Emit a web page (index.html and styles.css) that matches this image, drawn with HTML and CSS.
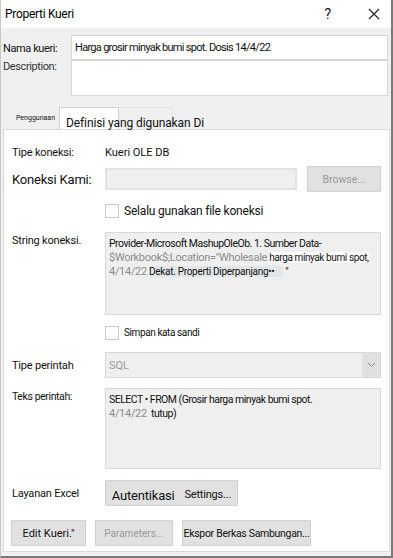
FILE: index.html
```html
<!DOCTYPE html>
<html>
<head>
  <title>Properti Kueri</title>
  <link rel="stylesheet" href="styles.css">
</head>
<body>
  <div class="window">

    <!-- title bar -->
    <div class="titlebar">
      <span class="title">Properti Kueri</span>
      <span class="help">?</span>
      <svg class="close" width="12" height="12" viewBox="0 0 12 12">
        <path d="M1 1 L11 11 M11 1 L1 11" stroke="#222" stroke-width="1.2" fill="none"/>
      </svg>
    </div>

    <!-- name + description -->
    <div class="top">
      <div class="top-row">
        <label class="top-label">Nama kueri:</label>
        <div class="top-input">Harga grosir minyak bumi spot. Dosis 14/4/22</div>
      </div>
      <div class="top-row desc">
        <label class="top-label">Description:</label>
        <div class="top-input tall"></div>
      </div>
    </div>

    <!-- tabs -->
    <div class="tabs">
      <span class="tab small">Penggunaan</span>
      <span class="tab boxed"><span class="tab-text">Definisi yang digunakan Di</span></span>
      <span class="tab ghost"></span>
    </div>

    <!-- tab panel -->
    <div class="panel">
      <div class="row r1">
        <span class="lbl">Tipe koneksi:</span>
        <span>Kueri OLE DB</span>
      </div>

      <div class="row r2">
        <span class="lbl big">Koneksi Kami:</span>
        <div class="field grow"></div>
        <div class="btn browse">Browse...</div>
      </div>

      <div class="row r3">
        <span class="lbl"></span>
        <span class="check"></span>
        <span class="check-text big">Selalu gunakan file koneksi</span>
      </div>

      <div class="row r4">
        <span class="lbl top-al">String koneksi.</span>
        <div class="field grow area">
          <div>Provider-Microsoft MashupOleOb. 1. Sumber Data-</div>
          <div><span class="dim">$Workbook$;Location="Wholesale</span> <span class="hl-white">harga minyak bumi spot,</span></div>
          <div><span class="dim">4/14/22</span> <span class="hl-blue">Dekat. Properti Diperpanjang•• &nbsp;&nbsp;&nbsp;</span> "</div>
        </div>
      </div>

      <div class="row r5">
        <span class="lbl"></span>
        <span class="check"></span>
        <span class="check-text">Simpan kata sandi</span>
      </div>

      <div class="row r6">
        <span class="lbl">Tipe perintah</span>
        <div class="field grow select">
          <span class="sel-val">SQL</span>
          <span class="sel-arrow">
            <svg width="9" height="6" viewBox="0 0 9 6"><path d="M1 1 L4.5 4.5 L8 1" stroke="#8a8a8a" stroke-width="1" fill="none"/></svg>
          </span>
        </div>
      </div>

      <div class="row r7">
        <span class="lbl top-al narrow">Teks perintah:</span>
        <div class="field grow area">
          <div>SELECT • FROM (Grosir harga minyak bumi spot.</div>
          <div><span class="dim">4/14/22</span> &nbsp;tutup)</div>
        </div>
      </div>

      <div class="row r8">
        <span class="lbl">Layanan Excel</span>
        <div class="btn auth"><span class="big">Autentikasi</span> Settings...</div>
      </div>

      <div class="row r9">
        <div class="btn edit">Edit Kueri."</div>
        <div class="btn params">Parameters...</div>
        <div class="btn export">Ekspor Berkas Sambungan...</div>
      </div>
    </div>

  </div>
</body>
</html>
```

FILE: styles.css
```css
body {
    margin: 0;
    font-family: Roboto, "Liberation Sans", sans-serif;
    font-size: 11px;
    color: #111;
    background-color: #fff;
}

.window {
    width: 393px;
    height: 558px;
    box-sizing: border-box;
    background-color: #f0f0f0;
    border-left: 1px solid #c8c8c8;
    border-right: 2px solid #7a7a7a;
    border-bottom: 2px solid #7a7a7a;
    overflow: hidden;
}

.titlebar {
    height: 28px;
    background-color: #fff;
    display: flex;
    align-items: center;
    padding-left: 4px;
}
.title {
    font-size: 12px;
    letter-spacing: -0.3px;
    color: #000;
}
.help {
    margin-left: auto;
    font-size: 14px;
    margin-right: 37px;
}
.close {
    margin-right: 11px;
}

.top {
    padding-top: 7px;
}
.top-row {
    display: flex;
    align-items: flex-start;
}
.top-label {
    width: 68px;
    padding-left: 2px;
    font-size: 11px;
    letter-spacing: -0.4px;
    padding-top: 7px;
}
.top-input {
    width: 317px;
    height: 25px;
    box-sizing: border-box;
    border: 1px solid #d6d6d6;
    background-color: #fff;
    padding: 5px 3px;
    font-size: 11px;
    letter-spacing: -0.7px;
    white-space: nowrap;
}
.top-input.tall {
    height: 36px;
}
.desc .top-label {
    padding-top: 0px;
    color: #333;
}

.tabs {
    height: 33px;
    display: flex;
    align-items: flex-end;
    padding-left: 3px;
}
.tab {
    height: 22px;
    box-sizing: border-box;
}
.tab.small {
    font-size: 7px;
    padding: 7px 0 0 12px;
    width: 55px;
}
.tab.boxed {
    width: 60px;
    background-color: #fff;
    border: 1px solid #cfcfcf;
    border-bottom: none;
    white-space: nowrap;
    padding: 8px 0 0 6px;
}
.tab-text {
    position: relative;
    z-index: 1;
    font-size: 12px;
    color: #111;
    letter-spacing: -0.1px;
}
.tab.ghost {
    width: 54px;
    border-top: 1px solid #e2e2e2;
    border-right: 1px solid #e8e8e8;
}

.panel {
    margin-left: 2px;
    width: 387px;
    height: 423px;
    box-sizing: border-box;
    background-color: #fff;
    border: 1px solid #dadada;
    padding: 0 8px 0 8px;
}

.row {
    display: flex;
    align-items: center;
}
.lbl {
    width: 93px;
    flex-shrink: 0;
    font-size: 11px;
    letter-spacing: -0.2px;
}
.lbl.top-al {
    align-self: flex-start;
    padding-top: 2px;
}
.lbl.narrow {
    font-size: 10.5px;
    letter-spacing: -0.4px;
}
.big {
    font-size: 13px;
}

.r1 { margin-top: 13px; height: 18px; }
.r2 { margin-top: 5px; height: 26px; }
.r3 { margin-top: 11px; height: 15px; }
.r4 { margin-top: 14px; height: 83px; align-items: stretch; }
.r5 { margin-top: 10px; height: 15px; }
.r6 { margin-top: 12px; height: 26px; }
.r7 { margin-top: 10px; height: 81px; align-items: stretch; }
.r8 { margin-top: 11px; height: 26px; }
.r9 { margin-top: 14px; height: 26px; gap: 9px; margin-left: -1px; }

.field {
    box-sizing: border-box;
    background-color: #efefef;
    border: 1px solid #d8d8d8;
    height: 100%;
}
.grow {
    flex: 1;
}
.r2 .field {
    height: 22px;
    margin-right: 10px;
    border: 2px solid #e2e2e2;
}

.area {
    padding: 4px 3px;
    font-size: 10.5px;
    line-height: 14px;
    letter-spacing: -0.5px;
    white-space: nowrap;
    overflow: hidden;
}
.dim {
    color: #8c8c8c;
    font-size: 11px;
    letter-spacing: -0.3px;
}
.hl-white {
    background-color: #fff;
    font-size: 10px;
    letter-spacing: -0.4px;
}
.hl-blue {
    background-color: #e3e6e9;
    font-size: 10px;
    letter-spacing: -0.3px;
}

.check {
    width: 12px;
    height: 12px;
    border: 1px solid #c8c8c8;
    background-color: #fff;
    margin-right: 5px;
}
.check-text {
    font-size: 10px;
    letter-spacing: -0.4px;
}
.check-text.big {
    font-size: 12px;
    letter-spacing: -0.2px;
}

.select {
    display: flex;
    align-items: center;
}
.sel-val {
    color: #9a9a9a;
    padding-left: 3px;
    font-size: 11px;
}
.sel-arrow {
    margin-left: auto;
    width: 18px;
    height: 100%;
    background-color: #e0e0e0;
    display: flex;
    align-items: center;
    justify-content: center;
}

.btn {
    height: 26px;
    box-sizing: border-box;
    background-color: #e1e1e1;
    border: 1px solid #d2d2d2;
    display: flex;
    align-items: center;
    justify-content: center;
    font-size: 11px;
    white-space: nowrap;
}
.browse {
    width: 74px;
    color: #9a9a9a;
    font-size: 10.5px;
}
.auth {
    width: 133px;
    gap: 10px;
    padding-top: 2px;
    letter-spacing: -0.2px;
}
.auth .big {
    font-size: 13px;
    padding-top: 3px;
}
.edit {
    width: 75px;
    font-size: 11px;
}
.params {
    width: 78px;
    color: #9a9a9a;
    font-size: 10px;
}
.export {
    width: 129px;
    font-size: 10.5px;
    letter-spacing: -0.3px;
}
```
